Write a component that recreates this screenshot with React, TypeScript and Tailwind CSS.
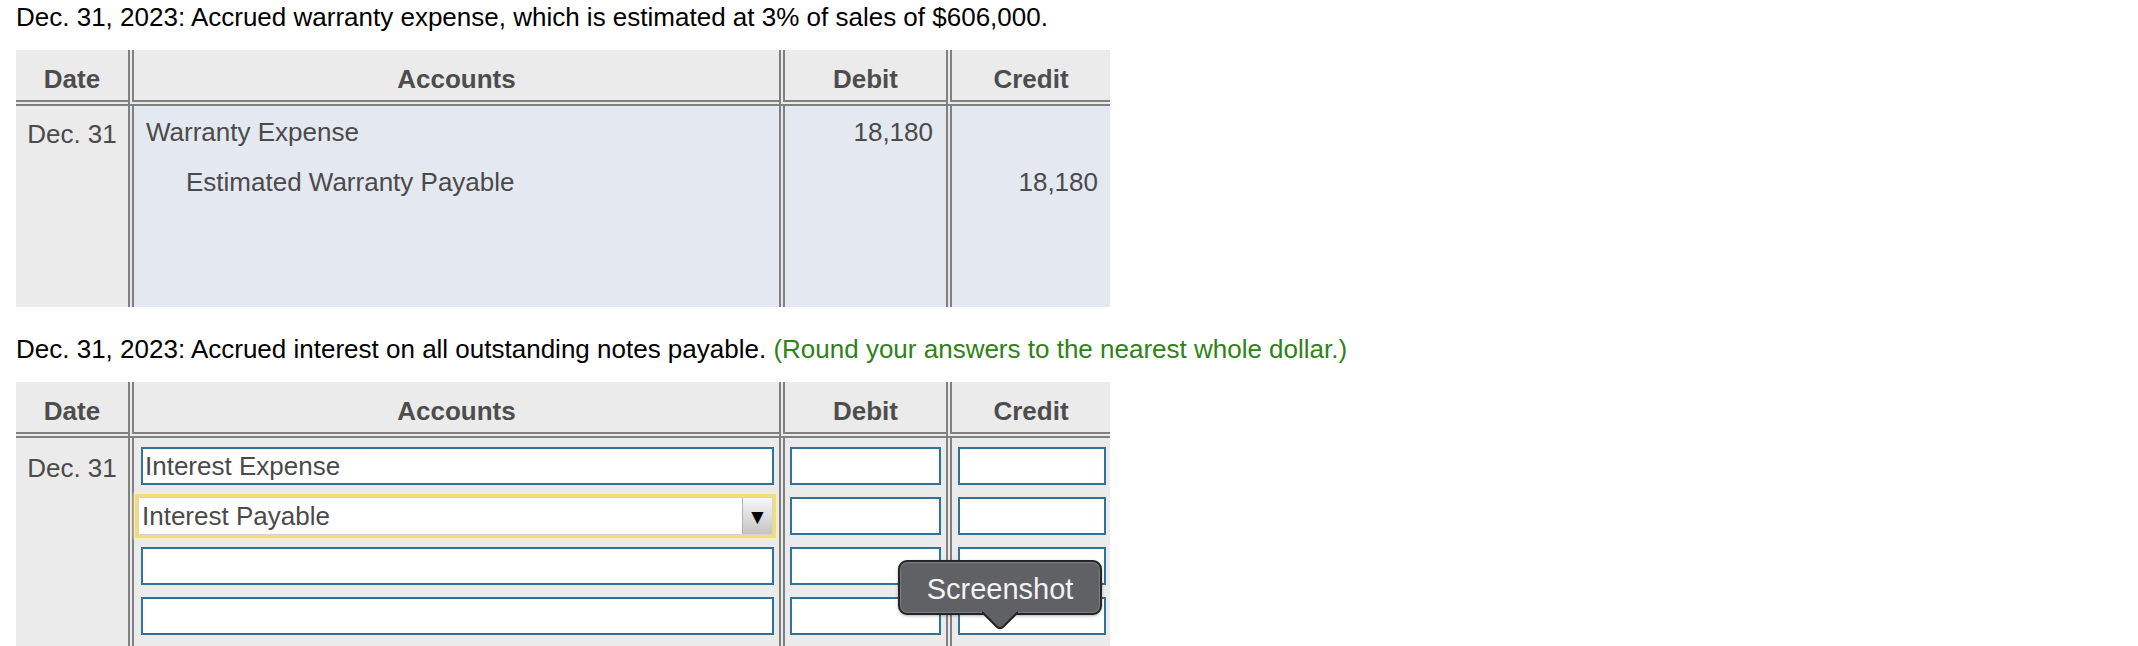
import React from "react";

function HeaderRow() {
  return (
    <div className="flex h-[56px] bg-[#ebebeb] text-[#4d4d4d] font-bold leading-[30px]">
      <div className="w-[112px] border-b-[6px] border-double border-[#808080] flex items-end justify-center pb-[6px]">Date</div>
      <div className="w-[651px] border-l-[6px] border-b-[6px] border-double border-[#808080] flex items-end justify-center pb-[6px]">Accounts</div>
      <div className="w-[167px] border-l-[6px] border-b-[6px] border-double border-[#808080] flex items-end justify-center pb-[6px]">Debit</div>
      <div className="w-[164px] border-l-[6px] border-b-[6px] border-double border-[#808080] flex items-end justify-center pb-[6px]">Credit</div>
    </div>
  );
}

function Input({ children }: { children?: React.ReactNode }) {
  return (
    <div className="h-[38px] border-2 border-[#2f7396] bg-white pl-[2px] flex items-center leading-[30px] text-[#4a4a4a] whitespace-nowrap overflow-hidden">
      {children}
    </div>
  );
}

function Select({ value }: { value: string }) {
  return (
    <div className="h-[38px] -ml-[3px] mr-[1px] bg-white border border-[#d4d4d4] shadow-[0_0_0_3px_#f5dc76,0_0_3px_4px_#faedb8] flex items-stretch">
      <div className="flex-1 flex items-center pl-[3px] leading-[30px] text-[#4a4a4a]">{value}</div>
      <div className="w-[30px] bg-gradient-to-b from-[#f8f8f8] to-[#c4c4c4] border-l border-[#b0b0b0] flex items-center justify-center text-[21px] text-black leading-none">▼</div>
    </div>
  );
}

export default function App() {
  return (
    <div className="relative w-[2138px] h-[646px] overflow-hidden bg-white pl-[16px] font-['Liberation_Sans',Arial,Helvetica,sans-serif] text-[26px]">
      {/* Part 1 */}
      <div className="pt-[2px] leading-[30px] text-black whitespace-nowrap">
        Dec. 31, 2023: Accrued warranty expense, which is estimated at 3% of sales of $606,000.
      </div>
      <div className="mt-[18px] w-[1094px]">
        <HeaderRow />
        <div className="flex h-[201px] leading-[30px] text-[#4a4a4a]">
          <div className="w-[112px] bg-[#ebebeb] pt-[13px] text-center">Dec. 31</div>
          <div className="w-[651px] bg-[#e4e8f1] border-l-[6px] border-double border-[#808080] pt-[11px] flex flex-col gap-[20px]">
            <div className="pl-[12px]">Warranty Expense</div>
            <div className="pl-[52px]">Estimated Warranty Payable</div>
          </div>
          <div className="w-[167px] bg-[#e4e8f1] border-l-[6px] border-double border-[#808080] pt-[11px] pr-[13px] text-right">18,180</div>
          <div className="w-[164px] bg-[#e4e8f1] border-l-[6px] border-double border-[#808080] pt-[61px] pr-[12px] text-right">18,180</div>
        </div>
      </div>

      {/* Part 2 */}
      <div className="mt-[27px] leading-[30px] text-black whitespace-nowrap">
        Dec. 31, 2023: Accrued interest on all outstanding notes payable.{" "}
        <span className="text-[#2e8216]">(Round your answers to the nearest whole dollar.)</span>
      </div>
      <div className="mt-[18px] w-[1094px]">
        <HeaderRow />
        <div className="flex h-[240px] bg-[#ebebeb] leading-[30px] text-[#4a4a4a]">
          <div className="w-[112px] pt-[15px] text-center">Dec. 31</div>
          <div className="w-[651px] border-l-[6px] border-double border-[#808080] pt-[9px] pl-[7px] pr-[5px] flex flex-col gap-[12px]">
            <Input>Interest Expense</Input>
            <Select value="Interest Payable" />
            <Input />
            <Input />
          </div>
          <div className="w-[167px] border-l-[6px] border-double border-[#808080] pt-[9px] pl-[5px] pr-[5px] flex flex-col gap-[12px]">
            <Input />
            <Input />
            <Input />
            <Input />
          </div>
          <div className="w-[164px] border-l-[6px] border-double border-[#808080] pt-[9px] pl-[6px] pr-[4px] flex flex-col gap-[12px]">
            <Input />
            <Input />
            <Input />
            <Input />
          </div>
        </div>
      </div>

      {/* Screenshot tooltip */}
      <div className="absolute left-[898px] top-[560px] w-[204px] h-[55px]">
        <div className="w-full h-full rounded-[9px] bg-[#5f6164] border-2 border-[#242424] shadow-[inset_0_0_0_1px_#7b7d80,0_1px_3px_rgba(0,0,0,0.3)] flex items-center justify-center pt-[3px] text-[29px] text-[#f3f3f3] leading-none">
          Screenshot
        </div>
        <svg className="absolute left-[84px] top-[51px]" width="36" height="20" viewBox="0 0 36 20">
          <path d="M0 1 L14.5 15.5 Q18 19 21.5 15.5 L36 1" fill="#5f6164" stroke="#242424" strokeWidth="2" />
        </svg>
      </div>
    </div>
  );
}
